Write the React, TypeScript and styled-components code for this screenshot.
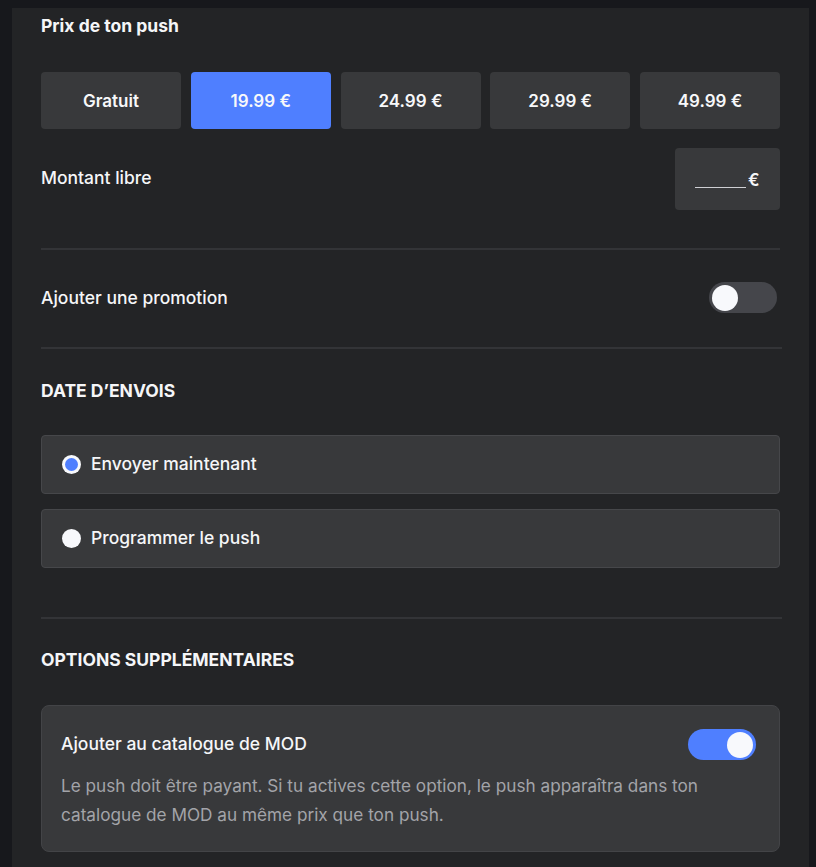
import React, { useState } from "react";
import styled, { createGlobalStyle } from "styled-components";

const Global = createGlobalStyle`
  html, body { margin: 0; padding: 0; background: #17181c; }
  body { font-family: Inter, "Noto Sans", sans-serif; color: #f5f6f8; -webkit-font-smoothing: antialiased; }
  * { box-sizing: border-box; }
`;

const Page = styled.div`
  padding: 8px 7px 0 12px;
  min-height: 867px;
`;

const Panel = styled.div`
  background: #232426;
  padding: 0 29px 24px 29px;
  min-height: 859px;
`;

const Title = styled.h2`
  margin: 0;
  font-size: 17.5px;
  font-weight: 700;
  line-height: 36px;
`;

const SectionHeading = styled.h3<{ $top: number }>`
  margin: ${(p) => p.$top}px 0 0 0;
  font-size: 17.5px;
  font-weight: 700;
  line-height: 24px;
  text-transform: uppercase;
`;

const PriceRow = styled.div`
  display: grid;
  grid-template-columns: repeat(5, 1fr);
  gap: 9.75px;
  margin-top: 28px;
`;

const PriceButton = styled.button<{ $active?: boolean }>`
  height: 57px;
  border: none;
  border-radius: 4px;
  background: ${(p) => (p.$active ? "#4f7fff" : "#38393b")};
  color: #f7f8fa;
  font-family: inherit;
  font-size: 17px;
  font-weight: 600;
  cursor: pointer;
`;

const Row = styled.div<{ $top: number }>`
  display: flex;
  align-items: center;
  justify-content: space-between;
  margin-top: ${(p) => p.$top}px;
`;

const Label = styled.span<{ $lift?: number }>`
  font-size: 17.5px;
  font-weight: 500;
  margin-bottom: ${(p) => (p.$lift ?? 0) * 2}px;
`;

const AmountBox = styled.div`
  width: 105px;
  height: 62px;
  border-radius: 4px;
  background: #38393b;
  display: flex;
  align-items: center;
  padding-left: 20px;
  padding-top: 2px;
`;

const AmountLine = styled.span`
  display: inline-block;
  width: 51px;
  height: 1px;
  background: #cfd0d4;
  margin-top: 14px;
`;

const Euro = styled.span`
  font-size: 17px;
  font-weight: 600;
  margin-left: 2px;
`;

const Divider = styled.hr<{ $top: number; $right?: number }>`
  border: none;
  height: 2px;
  background: #333437;
  margin: ${(p) => p.$top}px ${(p) => -(p.$right ?? 0)}px 0 0;
`;

const Track = styled.div<{ $on?: boolean; $inset?: number }>`
  width: 68px;
  height: 31px;
  border-radius: 16px;
  background: ${(p) => (p.$on ? "#4f7fff" : "#45464b")};
  padding: 2.5px 3px;
  display: flex;
  justify-content: ${(p) => (p.$on ? "flex-end" : "flex-start")};
  flex-shrink: 0;
  margin-right: ${(p) => p.$inset ?? 0}px;
`;

const Knob = styled.div`
  width: 26px;
  height: 26px;
  border-radius: 50%;
  background: #f8f9fc;
`;

const RadioCard = styled.label<{ $top: number }>`
  display: flex;
  align-items: center;
  gap: 10px;
  height: 59px;
  margin-top: ${(p) => p.$top}px;
  padding-left: 20px;
  background: #38393b;
  border: 1px solid #46474a;
  border-radius: 4px;
  cursor: pointer;
`;

const RadioDot = styled.span<{ $checked?: boolean }>`
  width: 19px;
  height: 19px;
  border-radius: 50%;
  background: #f8f9fc;
  display: flex;
  align-items: center;
  justify-content: center;
  &::after {
    content: "";
    width: 13px;
    height: 13px;
    border-radius: 50%;
    background: ${(p) => (p.$checked ? "#4f7fff" : "transparent")};
  }
`;

const OptionCard = styled.div`
  margin-top: 33px;
  background: #38393b;
  border: 1px solid #434447;
  border-radius: 8px;
  padding: 23px 23px 22px 19px;
`;

const OptionHead = styled.div`
  display: flex;
  align-items: center;
  justify-content: space-between;
`;

const OptionTitle = styled.span`
  font-size: 17.5px;
  font-weight: 500;
  margin-bottom: 2px;
`;

const OptionText = styled.p`
  margin: 11px 0 0 0;
  font-size: 17.2px;
  line-height: 29px;
  color: #a3a4a9;
  font-weight: 400;
`;

const prices = ["Gratuit", "19.99 €", "24.99 €", "29.99 €", "49.99 €"];

export default function App() {
  const [price, setPrice] = useState(1);
  const [promo, setPromo] = useState(false);
  const [when, setWhen] = useState(0);
  const [catalog, setCatalog] = useState(true);

  return (
    <>
      <Global />
      <Page>
        <Panel>
          <Title>Prix de ton push</Title>
          <PriceRow>
            {prices.map((p, i) => (
              <PriceButton key={p} $active={price === i} onClick={() => setPrice(i)}>
                {p}
              </PriceButton>
            ))}
          </PriceRow>
          <Row $top={19}>
            <Label $lift={2}>Montant libre</Label>
            <AmountBox>
              <AmountLine />
              <Euro>€</Euro>
            </AmountBox>
          </Row>
          <Divider $top={38} />
          <Row $top={32}>
            <Label>Ajouter une promotion</Label>
            <Track $on={promo} $inset={3} onClick={() => setPromo(!promo)}>
              <Knob />
            </Track>
          </Row>
          <Divider $top={34} $right={2} />
          <SectionHeading $top={30}>Date d’envois</SectionHeading>
          <RadioCard $top={32} onClick={() => setWhen(0)}>
            <RadioDot $checked={when === 0} />
            <Label $lift={1}>Envoyer maintenant</Label>
          </RadioCard>
          <RadioCard $top={15} onClick={() => setWhen(1)}>
            <RadioDot $checked={when === 1} />
            <Label $lift={1}>Programmer le push</Label>
          </RadioCard>
          <Divider $top={49} $right={2} />
          <SectionHeading $top={29}>Options supplémentaires</SectionHeading>
          <OptionCard>
            <OptionHead>
              <OptionTitle>Ajouter au catalogue de MOD</OptionTitle>
              <Track $on={catalog} onClick={() => setCatalog(!catalog)}>
                <Knob />
              </Track>
            </OptionHead>
            <OptionText>
              Le push doit être payant. Si tu actives cette option, le push apparaîtra dans ton catalogue de MOD au même prix que ton push.
            </OptionText>
          </OptionCard>
        </Panel>
      </Page>
    </>
  );
}
